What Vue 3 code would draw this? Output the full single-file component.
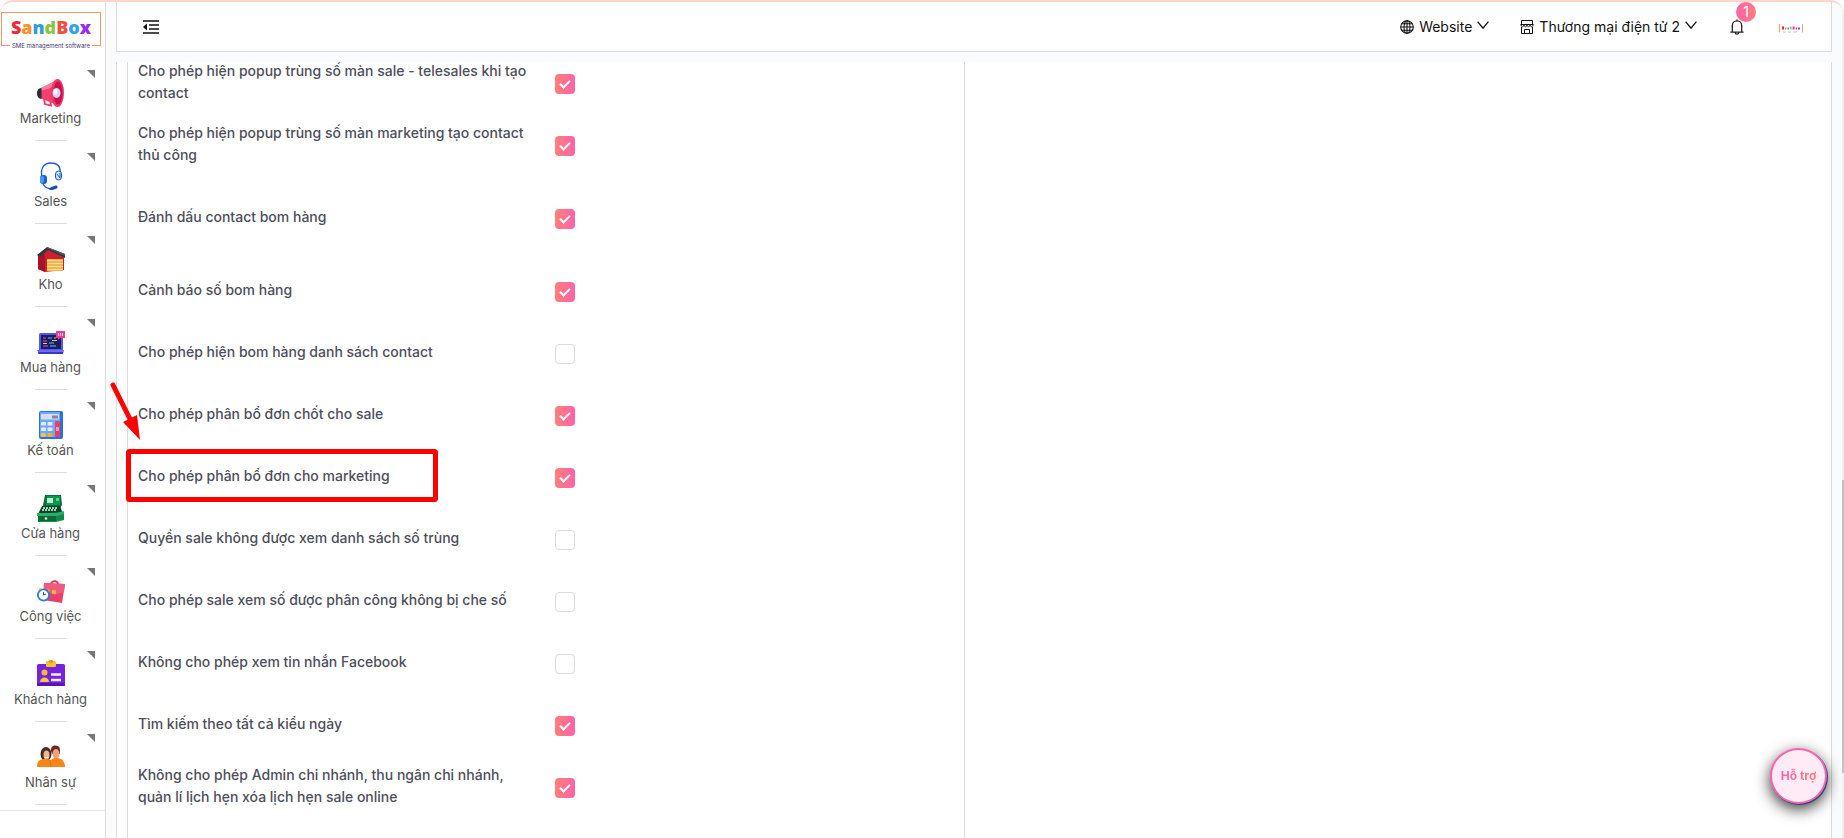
<template>
  <div class="page">
    <aside class="sidebar">
      <a href="#" class="logo">
        <span class="logo-name"><span v-for="l in logo" :key="l.id" :class="l.cls">{{ l.text }}</span></span>
        <span class="logo-sub">SME management software</span>
      </a>
      <nav class="menu">
        <a v-for="item in menu" :key="item.name" href="#" class="menu-item">
          <svg class="menu-icon" viewBox="0 0 28 28" aria-hidden="true" v-html="item.icon"></svg>
          <span class="menu-name">{{ item.name }}</span>
        </a>
      </nav>
    </aside>

    <div class="main">
      <header class="header">
        <button class="icon-btn" type="button" aria-label="Menu">
          <svg width="16" height="14" viewBox="0 0 16 14">
            <path d="M0 1h16M6 5h10M6 9h10M0 13h16" stroke="#111" stroke-width="1.4" fill="none" />
            <path d="M0 7l4-3.4v6.8z" fill="#111" />
          </svg>
        </button>
        <div class="header-right">
          <button class="drop" type="button">
            <svg width="14" height="14" viewBox="0 0 14 14" fill="none" stroke="#111" stroke-width="1.1">
              <circle cx="7" cy="7" r="6.3" />
              <ellipse cx="7" cy="7" rx="3" ry="6.3" />
              <path d="M7 .6v12.8M.6 7h12.8M1.6 3.8h10.8M1.6 10.2h10.8" />
            </svg>
            <span>Website</span>
            <svg class="arrow-down" width="12" height="8" viewBox="0 0 12 8"><path d="M.6.6L6 7.2 11.4.6" fill="none" stroke="#111" stroke-width="1.3" /></svg>
          </button>
          <button class="drop shop" type="button">
            <svg width="14" height="14" viewBox="0 0 14 14" fill="none" stroke="#111" stroke-width="1">
              <path d="M1.5.5h11v4h-11zM.5 4.500h13M1.5 7v6.500h11V7" />
              <path d="M1 4.500c0 3 3 3 3 0 0 3 3 3 3 0 0 3 3 3 3 0 0 3 3 3 3 0M4.500 13v-3.500h5V13" />
            </svg>
            <span>Thương mại điện tử 2</span>
            <svg class="arrow-down" width="12" height="8" viewBox="0 0 12 8"><path d="M.6.6L6 7.2 11.4.6" fill="none" stroke="#111" stroke-width="1.3" /></svg>
          </button>
          <button class="icon-btn bell" type="button" aria-label="Notifications">
            <svg width="14" height="16" viewBox="0 0 14 16" fill="none" stroke="#222" stroke-width="1.3">
              <path d="M.4 13.2h13.2M2.3 13V6.6a4.7 4.7 0 0 1 9.4 0V13M7 2V.4M5.2 13.4a1.8 1.8 0 0 0 3.6 0" />
            </svg>
            <span class="badge">1</span>
          </button>
          <svg class="mini-logo" width="24" height="9" viewBox="0 0 24 9" aria-hidden="true">
            <path d="M.5 0v8.5M23.5 0v8.5" fill="none" stroke="#f9a06c" />
            <path d="M3 4h2" stroke="#e8283c" stroke-width="3" />
            <path d="M6 4.5h1.500" stroke="#f4883a" stroke-width="2" />
            <path d="M8.500 4.5h1.500" stroke="#3aa0d8" stroke-width="2" />
            <path d="M11 4h1.500" stroke="#86c440" stroke-width="3" />
            <path d="M13.6 4h2" stroke="#f03c8c" stroke-width="3" />
            <path d="M16.6 4.5h1.500" stroke="#b43ce0" stroke-width="2" />
            <path d="M19 4.5h2" stroke="#8c3cf0" stroke-width="2" />
            <path d="M4 8h3M9 8h3M14 8h4" stroke="#c4c0d8" stroke-width="1" />
          </svg>
        </div>
      </header>

      <main class="content">
        <section class="settings">
          <div v-for="(row, i) in rows" :key="i" class="row" :class="{ tall: row.tall }">
            <label :for="'opt' + i">{{ row.label }}</label>
            <div class="control">
              <input :id="'opt' + i" v-model="row.checked" type="checkbox">
            </div>
          </div>
        </section>
        <section class="empty"></section>
      </main>
    </div>

    <!-- arrow and frame over the marketing option -->
    <svg class="mark" width="332" height="126" viewBox="0 0 332 126" aria-hidden="true">
      <path d="M4 5L23 43" stroke="#f00" stroke-width="5" stroke-linecap="round" />
      <path d="M31 60L14 42l14-7z" fill="#f00" />
      <rect x="19.500" y="71.500" width="307" height="48" rx="1" fill="none" stroke="#f00" stroke-width="5" />
    </svg>

    <button class="support" type="button"><span>Hỗ trợ</span></button>
    <div class="scroll"><div class="thumb"></div></div>
  </div>
</template>

<script setup>
import { ref } from 'vue'

const logo = [
  { id: 1, text: 'S', cls: 'l-red' },
  { id: 2, text: 'a', cls: 'l-orange' },
  { id: 3, text: 'n', cls: 'l-blue' },
  { id: 4, text: 'd', cls: 'l-green' },
  { id: 5, text: 'B', cls: 'l-pink' },
  { id: 6, text: 'o', cls: 'l-sky' },
  { id: 7, text: 'x', cls: 'l-violet' },
]

const menu = [
  {
    name: 'Marketing',
    icon: `<path d="M7 20l1 5 6 1.500-1-5" fill="none" stroke="#f0386b" stroke-width="1.800"/>
      <path d="M3 9.500L20 1v25L3 19z" fill="#f4406f"/><path d="M3 9.500L17 3v5L3 12z" fill="#ff7d9c"/>
      <path d="M4.500 9C1 9 0 12 0 14.500S1.500 20 4.500 20z" fill="#2b2d33"/>
      <ellipse cx="20.500" cy="14" rx="6.500" ry="14" fill="#f2376a"/><ellipse cx="21" cy="14" rx="4.500" ry="11.500" fill="#c9124a"/>
      <ellipse cx="19.500" cy="14" rx="4" ry="5" fill="#cdd6f3"/><ellipse cx="18.500" cy="13" rx="2" ry="3" fill="#f4f6ff"/>`
  },
  {
    name: 'Sales',
    icon: `<path d="M5 15C3 6 7 1 14 1s10 4 9 10" fill="none" stroke="#1b57e0" stroke-width="1.300"/>
      <rect x="3" y="13" width="7" height="9" rx="3" fill="#1463dd"/><rect x="3" y="14" width="4" height="7" rx="2" fill="#4a9af5"/>
      <rect x="18.500" y="9" width="6" height="9" rx="3" fill="#cfe0fa" stroke="#1b57c0"/><path d="M20 12l3 4M23 11v5" stroke="#1f62d8"/>
      <path d="M6 22c2 4 5 5 10 5" fill="none" stroke="#1b57e0" stroke-width="1.300"/><path d="M14 27l5-2" stroke="#1747c8" stroke-width="3" stroke-linecap="round"/>`
  },
  {
    name: 'Kho',
    icon: `<path d="M1 10l9-7 17 9v13l-19 2-7-3z" fill="#cc1f35"/><path d="M1 11l7-2v18l-7-3z" fill="#a81228"/>
      <path d="M0 10L10 2l18 7v4L11 5 3 12z" fill="#353639"/><path d="M10 2l18 7v2L10 3z" fill="#55575b"/>
      <path d="M10 14h16v12H10z" fill="#e8a838"/><path d="M10 15.500h16M10 18.500h16M10 21.500h16M10 24.500h16" stroke="#ffe08a" stroke-width="1.500"/>`
  },
  {
    name: 'Mua hàng',
    icon: `<rect x="2" y="5" width="24" height="18" rx="1.500" fill="#4f5be0"/><rect x="4" y="7" width="20" height="14" fill="#1c1c66"/>
      <path d="M0 22h27l-1 4H2z" fill="#6b6cf2"/><path d="M1 25h25" stroke="#2d24b8" stroke-width="1.500"/>
      <path d="M6 10h3M6 13h4M6 18h5" stroke="#f04fa0"/><path d="M11 10h4M12 15h5M13 18h6" stroke="#5fc8f5"/><path d="M6 15.500h4M15 12.500h5M17 10h2" stroke="#f5c84c"/>
      <path d="M19 3h9v7h-5l-2 2v-2h-2z" fill="#f0388f"/><path d="M21.500 5v3M23.500 5v3M25.500 5v3" stroke="#fff" stroke-width=".8"/>`
  },
  {
    name: 'Kế toán',
    icon: `<rect x="2" y="0" width="24" height="28" rx="2" fill="#2c70e0"/><rect x="3" y="1" width="20" height="25" rx="1" fill="#6aabff"/>
      <rect x="4" y="3" width="18" height="5.500" rx="1" fill="#d9dcf5"/><path d="M16 4.500v3M18 4.500v3M20 4.500v3" stroke="#334"/>
      <g fill="#e6ebff"><rect x="4" y="11" width="5" height="3.500" rx="1"/><rect x="10.500" y="11" width="5" height="3.500" rx="1"/><rect x="4" y="16.500" width="5" height="3.500" rx="1"/><rect x="10.500" y="16.500" width="5" height="3.500" rx="1"/></g>
      <rect x="4" y="22" width="5" height="4" rx="1.500" fill="#ffc233"/><rect x="10.500" y="22" width="5" height="4" rx="1.500" fill="#ffb01f"/>
      <rect x="18" y="10" width="5" height="16" rx="1" fill="#ef3c66"/><path d="M19 17h3M19 19h3" stroke="#fff"/>`
  },
  {
    name: 'Cửa hàng',
    icon: `<path d="M8 1h16l1 10-3 5H5z" fill="#0e6b3a"/><path d="M10 2h13v9H9z" fill="#0a9650"/><rect x="10" y="4" width="6" height="5" fill="#b9f0ce"/><rect x="19" y="4" width="3" height="3" fill="#52d68a"/>
      <path d="M5 12h18l3 8H1z" fill="#064726"/><path d="M6 14h14M5 16h15" stroke="#e6f5ea" stroke-width="1.300" stroke-dasharray="2 1"/>
      <path d="M1 20l23-2 3 2v6l-8 2H1z" fill="#128a4c"/><path d="M1 21h18v6H1z" fill="#0b6a38"/><path d="M0 19h20l7-2v3l-7 2H0z" fill="#27b268"/><circle cx="9" cy="24.500" r="1.300" fill="#e8f5d0"/>`
  },
  {
    name: 'Công việc',
    icon: `<path d="M14 8c0-5 7-5 7-1" fill="none" stroke="#e0304f" stroke-width="1.800"/>
      <path d="M7 6l21 1-3 19-19-3z" fill="#e83e6b"/><path d="M7 6l21 1-1 8-10 3-10-4z" fill="#f05a82"/><path d="M15 13l4 .5v3.500l-4-.5z" fill="#fcc02e"/>
      <circle cx="6.500" cy="18" r="6.500" fill="#2084dc"/><circle cx="6.500" cy="18" r="4.700" fill="#fff"/><path d="M6.500 15v3l2.500-1" stroke="#334" fill="none" stroke-width=".9"/>
      <path d="M1 14l2-3 2 1M10 11l3 2-1 2" fill="#f5a11f"/>`
  },
  {
    name: 'Khách hàng',
    icon: `<rect x="0" y="4" width="28" height="22" rx="1.500" fill="#7424dc"/><path d="M0 23h28v2q0 1-1 1H1q-1 0-1-1z" fill="#5a14b8"/>
      <rect x="9" y="1" width="10" height="6" rx="1" fill="#fbc02d"/><rect x="12" y="0" width="4" height="3" rx="1" fill="#e69a12"/>
      <circle cx="7.500" cy="12.500" r="3" fill="#fbb829"/><path d="M3 22c0-6 9-6 9 0z" fill="#fbc538"/><path d="M14 14.500h10M14 20h10" stroke="#f3ebff" stroke-width="2.500"/>`
  },
  {
    name: 'Nhân sự',
    icon: `<ellipse cx="9" cy="11" rx="5.500" ry="7" fill="#4a2a24"/><ellipse cx="9.500" cy="12" rx="3" ry="4.500" fill="#f7b48e"/>
      <path d="M14 8c-1-7 9-7 9-1v4h-8z" fill="#6b2c20"/><ellipse cx="19" cy="11" rx="3.500" ry="5" fill="#f4a27c"/><path d="M7.500 14.500h4" stroke="#fff"/>
      <path d="M0 24c0-8 5-8 9-8s7 1 7 8zM12 24c1-8 4-9 7-9s9 1 9 9z" fill="#fb8418"/><path d="M14 24c-1-4-1-5-1-7" stroke="#e0690c" fill="none"/>`
  },
]

const rows = ref([
  { label: 'Cho phép hiện popup trùng số màn sale - telesales khi tạo contact', checked: true },
  { label: 'Cho phép hiện popup trùng số màn marketing tạo contact thủ công', checked: true },
  { label: 'Đánh dấu contact bom hàng', checked: true, tall: true },
  { label: 'Cảnh báo số bom hàng', checked: true },
  { label: 'Cho phép hiện bom hàng danh sách contact', checked: false },
  { label: 'Cho phép phân bổ đơn chốt cho sale', checked: true },
  { label: 'Cho phép phân bổ đơn cho marketing', checked: true },
  { label: 'Quyền sale không được xem danh sách số trùng', checked: false },
  { label: 'Cho phép sale xem số được phân công không bị che số', checked: false },
  { label: 'Không cho phép xem tin nhắn Facebook', checked: false },
  { label: 'Tìm kiếm theo tất cả kiểu ngày', checked: true },
  { label: 'Không cho phép Admin chi nhánh, thu ngân chi nhánh, quản lí lịch hẹn xóa lịch hẹn sale online', checked: true },
])
</script>

<style>
body {
  background: #fff;
}
</style>

<style scoped>
.page {
  position: relative;
  display: flex;
  height: 100vh;
  box-sizing: border-box;
  overflow: hidden;
  border-top: 2px solid #ffd5c9;
  border-radius: 14px 14px 0 0;
  background: #f9fbfd;
  font-family: 'Inter', 'Liberation Sans', sans-serif;
  font-size: 14px;
  line-height: 22px;
}
.page *, .page *::before, .page *::after {
  box-sizing: border-box;
}
button {
  padding: 0;
  border: 0;
  background: none;
  font: inherit;
  color: inherit;
  cursor: pointer;
}
svg {
  flex: none;
}

/* sidebar */
.sidebar {
  flex: none;
  width: 106px;
  background: #fff;
  border-right: 1px solid #dcdcdc;
}
.logo {
  display: flex;
  flex-direction: column;
  align-items: center;
  height: 34px;
  margin: 10px 4px 0 1px;
  border: 1px solid #f7955f;
  text-decoration: none;
}
.logo-name {
  font-family: 'Open Sans', sans-serif;
  font-weight: 800;
  font-size: 18px;
  line-height: 29px;
}
.logo-sub {
  flex: none;
  padding: 0 2px;
  background: #fff;
  color: #3f3671;
  font-size: 6px;
  line-height: 8px;
  white-space: nowrap;
}
.l-red { color: #ee2a3a; }
.l-orange { color: #f6922c; }
.l-blue { color: #2f9be0; }
.l-green { color: #8cc63f; }
.l-pink { color: #f0503c; }
.l-sky { color: #2fa4ec; }
.l-violet { color: #9a2cf0; }

.menu {
  margin-top: 12px;
  padding-bottom: 5px;
  border-bottom: 1px solid #e4e4e4;
}
.menu-item {
  position: relative;
  display: flex;
  flex-direction: column;
  align-items: center;
  height: 83px;
  padding: 21px 4px 0 0;
  color: #555;
  font-size: 13px;
  text-decoration: none;
}
.menu-icon {
  width: 28px;
  height: 28px;
}
.menu-item::before {
  content: '';
  position: absolute;
  top: 12px;
  right: 10px;
  border: 4px solid;
  border-color: #777 #777 transparent transparent;
}
.menu-item::after {
  content: '';
  width: 32px;
  height: 1px;
  margin-top: 11px;
  background: #dcdcdc;
}

/* header */
.main {
  flex: 1;
  min-width: 0;
  display: flex;
  flex-direction: column;
  margin: 0 12px 0 10px;
}
.header {
  flex: none;
  display: flex;
  justify-content: space-between;
  align-items: center;
  height: 50px;
  padding: 0 28px 0 26px;
  background: #fff;
  border: 1px solid #dcdcdc;
  border-top: 0;
  color: #111;
}
.header-right {
  display: flex;
  align-items: center;
}
.icon-btn {
  display: flex;
}
.drop {
  display: flex;
  align-items: center;
  gap: 5px;
}
.arrow-down {
  margin-bottom: 4px;
}
.shop {
  margin-left: 31px;
}
.bell {
  position: relative;
  margin-left: 33px;
}
.badge {
  position: absolute;
  top: -17px;
  left: 6px;
  width: 20px;
  height: 20px;
  border-radius: 50%;
  background: linear-gradient(90deg, #ff62a8, #ff7e7e);
  color: #fff;
  font-size: 14px;
  line-height: 20px;
}
.mini-logo {
  margin: 4px 0 0 35px;
}

/* settings */
.content {
  flex: 1;
  min-height: 0;
  display: flex;
  margin-top: 10px;
  padding-left: 10px;
  overflow: hidden;
  background: #fff;
  border: solid #dcdcdc;
  border-width: 0 1px;
}
.settings {
  flex: 0 0 49.2%;
  margin-top: -9px;
  border: solid #dcdcdc;
  border-width: 0 1px;
}
.empty {
  flex: 1;
}
.row {
  display: grid;
  grid-template-columns: 1fr 1fr;
  align-items: center;
  min-height: 62px;
}
.row.tall {
  min-height: 84px;
}
.row label {
  padding: 0 10px 4px;
  color: #4e4e5a;
  font-weight: 500;
}
.control {
  display: flex;
  padding-left: 9px;
}
input[type='checkbox'] {
  appearance: none;
  display: grid;
  place-items: center;
  width: 20px;
  height: 20px;
  margin: 0;
  border: 1px solid #dcdcdc;
  border-radius: 4px;
  background: #fff;
}
input[type='checkbox']:checked {
  border: 0;
  background: linear-gradient(90deg, #ff7f79, #ff63a9);
}
input[type='checkbox']:checked::after {
  content: '';
  width: 6px;
  height: 10px;
  margin-bottom: 3px;
  border: solid #fff;
  border-width: 0 2px 2px 0;
  transform: rotate(45deg);
}

.mark {
  position: absolute;
  top: 378px;
  left: 109px;
  pointer-events: none;
}
.support {
  position: absolute;
  right: 17px;
  bottom: 34px;
  width: 57px;
  height: 56px;
  border: 2px solid #ff62ac;
  border-radius: 50%;
  background: #ffebf5;
  box-shadow: 1px 1px 0 #234a86, 0 5px 15px rgba(0, 0, 0, 0.8);
  font-size: 12px;
  font-weight: 700;
}
.support span {
  background: linear-gradient(90deg, #ff62ac, #ff7f79);
  background-clip: text;
  color: transparent;
}
.scroll {
  position: absolute;
  top: 0;
  right: 0;
  bottom: 0;
  width: 2px;
  background: #f1f1f1;
}
.thumb {
  height: 35%;
  margin-top: 478px;
  background: #c1c1c1;
}
</style>
